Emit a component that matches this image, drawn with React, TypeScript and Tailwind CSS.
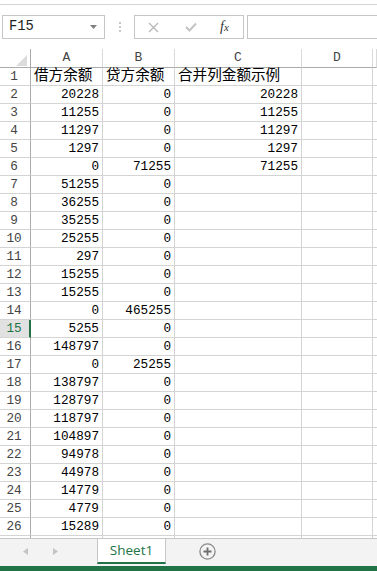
import React from 'react';

const mono = { fontFamily: '"Liberation Mono", "Noto Sans CJK SC", monospace' };

const rows: [string, string, string][] = [
  ['借方余额', '贷方余额', '合并列金额示例'],
  ['20228', '0', '20228'],
  ['11255', '0', '11255'],
  ['11297', '0', '11297'],
  ['1297', '0', '1297'],
  ['0', '71255', '71255'],
  ['51255', '0', ''],
  ['36255', '0', ''],
  ['35255', '0', ''],
  ['25255', '0', ''],
  ['297', '0', ''],
  ['15255', '0', ''],
  ['15255', '0', ''],
  ['0', '465255', ''],
  ['5255', '0', ''],
  ['148797', '0', ''],
  ['0', '25255', ''],
  ['138797', '0', ''],
  ['128797', '0', ''],
  ['118797', '0', ''],
  ['104897', '0', ''],
  ['94978', '0', ''],
  ['44978', '0', ''],
  ['14779', '0', ''],
  ['4779', '0', ''],
  ['15289', '0', ''],
  ['', '', ''],
];

const cell = 'h-[18px] border-r border-b border-[#d4d4d4] flex items-center px-[3px] text-[12.7px] text-black';

const FormulaBar = () => (
  <div className="flex items-center h-[24px] mt-[10px]">
    <div className="ml-[2px] w-[103px] h-[24px] border border-[#c6c6c6] flex items-center pl-[6px] pr-[7px]">
      <span className="text-[13.8px] text-[#222] flex-1" style={mono}>F15</span>
      <svg width="7" height="4" viewBox="0 0 7 4">
        <polygon points="0,0 7,0 3.5,4" fill="#808080" />
      </svg>
    </div>
    <div className="w-[29px] flex flex-col items-center gap-[2px]">
      <div className="w-[2px] h-[2px] bg-[#c8c8c8]" />
      <div className="w-[2px] h-[2px] bg-[#c8c8c8]" />
      <div className="w-[2px] h-[2px] bg-[#c8c8c8]" />
    </div>
    <div className="w-[110px] h-[24px] border border-[#c6c6c6] flex items-center">
      <svg className="ml-[13px]" width="11" height="11" viewBox="0 0 11 11">
        <path d="M1 1 L10 10 M10 1 L1 10" stroke="#b8b8b8" strokeWidth="1.3" />
      </svg>
      <svg className="ml-[26px]" width="12" height="10" viewBox="0 0 12 10">
        <path d="M1 5 L4.5 8.5 L11 1.5" stroke="#c4c4c4" strokeWidth="2" fill="none" />
      </svg>
      <span
        className="ml-[23px] text-[14px] italic text-[#333] leading-none"
        style={{ fontFamily: '"Liberation Serif", serif' }}
      >
        f<span className="text-[11px]">x</span>
      </span>
    </div>
    <div className="ml-[3px] flex-1 h-[24px] border border-r-0 border-[#c6c6c6]" />
  </div>
);

const Grid = () => (
  <div className="mt-[10px] flex-1 overflow-hidden" style={mono}>
    <div className="grid grid-cols-[31px_72px_72px_127px_71px_1fr]">
      <div className="h-[19px] border-r border-b border-[#ababab] flex items-end justify-end pr-[3px] pb-[1px]">
        <svg width="11" height="11" viewBox="0 0 11 11">
          <polygon points="11,0 11,11 0,11" fill="#dcdcdc" />
        </svg>
      </div>
      {['A', 'B', 'C', 'D', ''].map((c, i) => (
        <div
          key={i}
          className="h-[19px] border-r border-b border-r-[#dadada] border-b-[#ababab] flex items-center justify-center text-[13px] text-[#444]"
        >
          {c}
        </div>
      ))}
      {rows.map((r, i) => {
        const n = i + 1;
        const sel = n === 15;
        const head = i === 0;
        return (
          <React.Fragment key={n}>
            <div
              className={
                sel
                  ? 'h-[18px] border-b border-[#d4d4d4] border-r-2 border-r-[#217346] bg-[#e1e1e1] flex items-center justify-center pr-[1px] text-[12.7px] text-[#217346]'
                  : 'h-[18px] border-b border-[#d4d4d4] border-r border-r-[#ababab] flex items-center justify-center pr-[2px] text-[12.7px] text-[#444]'
              }
            >
              {n < 27 ? n : ''}
            </div>
            {r.map((v, j) => (
              <div
                key={j}
                className={
                  head
                    ? 'h-[18px] border-r border-b border-[#d4d4d4] flex items-center px-[3px] text-[14.6px] text-black whitespace-nowrap'
                    : cell + ' justify-end'
                }
              >
                {v}
              </div>
            ))}
            <div className="h-[18px] border-r border-b border-[#d4d4d4]" />
            <div className="h-[18px] border-b border-[#d4d4d4]" />
          </React.Fragment>
        );
      })}
    </div>
  </div>
);

const TabBar = () => (
  <div className="h-[28px] border-t border-[#c6c6c6] bg-[#f3f3f3] flex items-start">
    <div className="w-[97px] h-[25px] flex items-center">
      <svg className="ml-[23px]" width="5" height="7" viewBox="0 0 5 7">
        <polygon points="5,0 5,7 0,3.5" fill="#c4c4c4" />
      </svg>
      <svg className="ml-[25px]" width="5" height="7" viewBox="0 0 5 7">
        <polygon points="0,0 0,7 5,3.5" fill="#c4c4c4" />
      </svg>
    </div>
    <div
      className="w-[69px] h-[25px] bg-white border-l border-r border-[#c6c6c6] border-b-2 border-b-[#217346] flex items-center justify-center text-[13.5px] text-[#217346]"
      style={{ fontFamily: '"Open Sans", "Noto Sans", sans-serif' }}
    >
      Sheet1
    </div>
    <div className="ml-[33px] h-[25px] flex items-center">
      <svg width="17" height="17" viewBox="0 0 17 17">
        <circle cx="8.5" cy="8.5" r="7.6" fill="none" stroke="#8a8a8a" strokeWidth="1.3" />
        <path d="M8.5 4.5 V12.5 M4.5 8.5 H12.5" stroke="#6f6f6f" strokeWidth="1.8" />
      </svg>
    </div>
  </div>
);

export default function App() {
  return (
    <div className="w-[377px] h-[571px] overflow-hidden bg-white flex flex-col">
      <div className="h-[5px] shrink-0 border-b border-[#d5d5d5]" />
      <FormulaBar />
      <Grid />
      <TabBar />
      <div className="h-[5px] shrink-0 bg-[#217346]" />
    </div>
  );
}
